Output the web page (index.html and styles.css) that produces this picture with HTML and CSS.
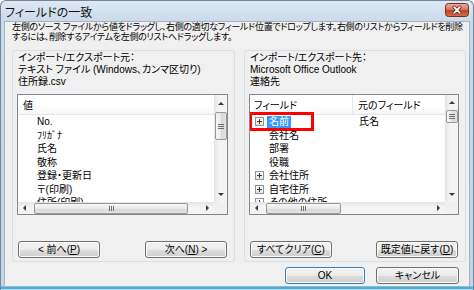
FILE: index.html
```html
<!DOCTYPE html>
<html lang="ja">
<head>
    <meta charset="UTF-8">
    <title>フィールドの一致</title>
    <link rel="stylesheet" href="styles.css">
</head>
<body>
    <div class="window">
        <div class="titlebar">
            <span class="title">フィールドの一致</span>
            <svg class="close" width="24" height="14" viewBox="0 0 24 14">
                <defs>
                    <linearGradient id="closeGrad" x1="0" y1="0" x2="0" y2="1">
                        <stop offset="0" stop-color="#eab2a5"/>
                        <stop offset="0.48" stop-color="#d7735d"/>
                        <stop offset="0.5" stop-color="#c2401f"/>
                        <stop offset="1" stop-color="#d9704f"/>
                    </linearGradient>
                </defs>
                <rect x="0.5" y="0.5" width="23" height="13" rx="3" fill="url(#closeGrad)" stroke="#74301f"/>
                <path d="M9.2 4.2 L14.8 9.8 M14.8 4.2 L9.2 9.8" stroke="#6a2416" stroke-width="3.4" stroke-linecap="round"/>
                <path d="M9.2 4.2 L14.8 9.8 M14.8 4.2 L9.2 9.8" stroke="#fff" stroke-width="1.8" stroke-linecap="round"/>
            </svg>
        </div>

        <div class="body">
            <p class="desc">左側のソース ファイルから値をドラッグし、右側の適切なフィールド位置でドロップします。右側のリストからフィールドを削除<br>するには、削除するアイテムを左側のリストへドラッグします。</p>

            <div class="panes">
                <!-- source side -->
                <div class="group">
                    <div class="info">
                        <div>インポート/エクスポート元：</div>
                        <div>テキスト ファイル (Windows、カンマ区切り)</div>
                        <div>住所録.csv</div>
                    </div>
                    <div class="list">
                        <div class="list-main">
                            <div class="list-head">
                                <span class="head-col">値</span>
                            </div>
                            <ul class="rows source-rows">
                                <li>No.</li>
                                <li>ﾌﾘｶﾞﾅ</li>
                                <li>氏名</li>
                                <li>敬称</li>
                                <li>登録・更新日</li>
                                <li>〒(印刷)</li>
                                <li>住所(印刷)</li>
                            </ul>
                        </div>
                        <div class="vscroll">
                            <span class="arrow arrow-up"></span>
                            <span class="thumb thumb-v" style="margin-top: 1px; height: 28px;"></span>
                            <span class="spacer"></span>
                            <span class="arrow arrow-down"></span>
                        </div>
                        <div class="hscroll">
                            <span class="arrow arrow-left"></span>
                            <span class="thumb thumb-h" style="margin-left: 3px; width: 154px;"></span>
                            <span class="spacer"></span>
                            <span class="arrow arrow-right"></span>
                        </div>
                        <div class="corner"></div>
                    </div>
                    <div class="group-buttons">
                        <button class="btn">&lt; 前へ(<u>P</u>)</button>
                        <button class="btn">次へ(<u>N</u>) &gt;</button>
                    </div>
                </div>

                <!-- destination side -->
                <div class="group">
                    <div class="info">
                        <div>インポート/エクスポート先：</div>
                        <div>Microsoft Office Outlook</div>
                        <div>連絡先</div>
                    </div>
                    <div class="list">
                        <div class="list-main">
                            <div class="list-head">
                                <span class="head-col field-col">フィールド</span>
                                <span class="head-col">元のフィールド</span>
                            </div>
                            <ul class="rows target-rows">
                                <li class="marked">
                                    <span class="field-col"><span class="expander"></span><span class="selected">名前</span></span>
                                    <span class="orig-col">氏名</span>
                                    <span class="red-box"></span>
                                </li>
                                <li><span class="field-col sub">会社名</span></li>
                                <li><span class="field-col sub">部署</span></li>
                                <li><span class="field-col sub">役職</span></li>
                                <li><span class="field-col"><span class="expander"></span>会社住所</span></li>
                                <li><span class="field-col"><span class="expander"></span>自宅住所</span></li>
                                <li><span class="field-col"><span class="expander"></span>その他の住所</span></li>
                            </ul>
                        </div>
                        <div class="vscroll">
                            <span class="arrow arrow-up short"></span>
                            <span class="thumb thumb-v" style="margin-top: 1px; height: 13px;"></span>
                            <span class="spacer"></span>
                            <span class="arrow arrow-down"></span>
                        </div>
                        <div class="hscroll">
                            <span class="arrow arrow-left"></span>
                            <span class="thumb thumb-h" style="margin-left: 3px; width: 75px;"></span>
                            <span class="spacer"></span>
                            <span class="arrow arrow-right"></span>
                        </div>
                        <div class="corner"></div>
                    </div>
                    <div class="group-buttons">
                        <button class="btn">すべてクリア(<u>C</u>)</button>
                        <button class="btn">既定値に戻す(<u>D</u>)</button>
                    </div>
                </div>
            </div>

            <div class="footer">
                <button class="btn btn-ok">OK</button>
                <button class="btn btn-cancel">キャンセル</button>
            </div>
        </div>
        <div class="frame-bottom"></div>
    </div>
</body>
</html>
```

FILE: styles.css
```css
* {
    margin: 0;
    padding: 0;
    box-sizing: border-box;
}

body {
    width: 474px;
    height: 290px;
    overflow: hidden;
    font-family: "Liberation Sans", "Noto Sans CJK JP", sans-serif;
    font-size: 10px;
    color: #000;
    font-feature-settings: "palt";
    background: #fff;
}

.window {
    height: 290px;
    display: flex;
    flex-direction: column;
    background: linear-gradient(#dde8f3, #cbdae9 20px, #c3d5e6);
    border: 1px solid #71869b;
    border-bottom: none;
    border-radius: 6px 6px 0 0;
    padding: 0 3px;
}

/* title bar */
.titlebar {
    height: 20px;
    display: flex;
    align-items: center;
    padding-left: 1px;
}

.title {
    font-size: 12px;
    color: #111;
}

.close {
    margin-left: auto;
    margin-right: 1px;
    margin-top: -2px;
}

/* dialog client area */
.body {
    flex: 1;
    background: #f0f0f0;
    border: 1px solid #a3b4c6;
    border-bottom: none;
    padding: 0 3px 0 7px;
    display: flex;
    flex-direction: column;
}

.desc {
    font-size: 9px;
    line-height: 10px;
    white-space: nowrap;
    letter-spacing: -0.3px;
}

.panes {
    display: flex;
    gap: 9px;
    margin-top: 8px;
}

.group {
    width: 223px;
    border: 1px solid #d5dfe5;
    border-radius: 3px;
    padding: 1px 6px 3px 4px;
    display: flex;
    flex-direction: column;
}

.group + .group {
    width: 222px;
}

.info {
    line-height: 12px;
    padding-left: 1px;
    white-space: nowrap;
}

/* list views */
.list {
    height: 121px;
    margin-top: 6px;
    border: 1px solid #828790;
    background: #fff;
    display: grid;
    grid-template-columns: 1fr 13px;
    grid-template-rows: 1fr 12px;
}

.list-main {
    overflow: hidden;
    min-width: 0;
}

.list-head {
    height: 20px;
    display: flex;
    border-bottom: 1px solid #e3e6ea;
    background: linear-gradient(#fff, #fff 55%, #f6f7f8);
}

.head-col {
    padding-left: 5px;
    line-height: 21px;
}

.list-head .field-col {
    width: 103px;
    padding-left: 4px;
    border-right: 1px solid #e3e6ea;
}

.rows {
    list-style: none;
    white-space: nowrap;
}

.rows li {
    height: 13.5px;
    line-height: 13.5px;
    display: flex;
}

.source-rows li {
    padding-left: 19px;
}

.target-rows li {
    position: relative;
}

.target-rows .field-col {
    width: 103px;
    padding-left: 5px;
    display: flex;
    align-items: center;
}

.target-rows .field-col.sub {
    padding-left: 19px;
}

.orig-col {
    padding-left: 6px;
}

.expander {
    width: 9px;
    height: 9px;
    margin-right: 5px;
    border: 1px solid #8e9398;
    background: linear-gradient(#fff, #e4e4e4);
    position: relative;
}

.expander::before,
.expander::after {
    content: "";
    position: absolute;
    background: #3a3a3a;
}

.expander::before {
    left: 1px;
    top: 3px;
    width: 5px;
    height: 1px;
}

.expander::after {
    left: 3px;
    top: 1px;
    width: 1px;
    height: 5px;
}

.selected {
    background: #3399ff;
    color: #fff;
    padding: 0 2px;
    margin-left: -2px;
    line-height: 12px;
}

.red-box {
    position: absolute;
    left: -1px;
    top: -3px;
    width: 65px;
    height: 19px;
    border: 3px solid #f00;
}

/* scrollbars */
.vscroll {
    grid-column: 2;
    grid-row: 1;
    display: flex;
    flex-direction: column;
    align-items: center;
    background: linear-gradient(90deg, #e4e4e4, #f4f4f4 40%, #f4f4f4);
}

.hscroll {
    grid-column: 1;
    grid-row: 2;
    display: flex;
    align-items: center;
    background: linear-gradient(#e4e4e4, #f4f4f4 40%, #f4f4f4);
}

.corner {
    grid-column: 2;
    grid-row: 2;
    background: #f0f0f0;
}

.spacer {
    flex: 1;
}

.arrow {
    display: flex;
    align-items: center;
    justify-content: center;
    flex: none;
}

.vscroll .arrow {
    width: 13px;
    height: 16px;
}

.vscroll .arrow.short {
    height: 14px;
}

.hscroll .arrow {
    width: 13px;
    height: 12px;
}

.arrow::before {
    content: "";
    width: 0;
    height: 0;
    border: 3px solid transparent;
}

.arrow-up::before {
    border-bottom-color: #3b3b3b;
    border-top-width: 0;
}

.arrow-down::before {
    border-top-color: #3b3b3b;
    border-bottom-width: 0;
}

.arrow-left::before {
    border-right-color: #3b3b3b;
    border-left-width: 0;
}

.arrow-right::before {
    border-left-color: #3b3b3b;
    border-right-width: 0;
}

.thumb {
    flex: none;
    border: 1px solid #989898;
    border-radius: 2px;
    display: flex;
    align-items: center;
    justify-content: center;
}

.thumb-v {
    width: 12px;
    background: linear-gradient(90deg, #f6f6f6, #e9e9e9 50%, #d9d9d9 51%, #e2e2e2);
}

.thumb-h {
    height: 11px;
    background: linear-gradient(#f6f6f6, #e9e9e9 50%, #d9d9d9 51%, #e2e2e2);
}

.thumb-v::before {
    content: "";
    width: 6px;
    height: 5px;
    background: repeating-linear-gradient(#6d6d6d 0 1px, transparent 1px 2px);
}

.thumb-h::before {
    content: "";
    width: 5px;
    height: 5px;
    background: repeating-linear-gradient(90deg, #6d6d6d 0 1px, transparent 1px 2px);
}

/* buttons */
.group-buttons {
    display: flex;
    justify-content: space-between;
    margin-top: 26px;
    padding: 0 1px;
}

.btn {
    width: 82px;
    height: 17px;
    font: inherit;
    font-size: 10px;
    line-height: 15px;
    color: #000;
    text-align: center;
    border: 1px solid #707070;
    border-radius: 3px;
    background: linear-gradient(#f3f3f3, #ebebeb 50%, #dddddd 51%, #cfcfcf);
    box-shadow: inset 0 0 0 1px #fbfbfb;
}

.footer {
    display: flex;
    justify-content: flex-end;
    gap: 11px;
    margin-top: 5px;
    padding-right: 7px;
}

.btn-ok {
    width: 80px;
    border-color: #3c7fb1;
}

.btn-cancel {
    width: 83px;
}

.frame-bottom {
    height: 4px;
    margin: 0 -3px;
    border-top: 1px solid #a3b4c6;
    background: linear-gradient(#3ab4dc 0 2px, #c3d5e6 2px);
}
```
